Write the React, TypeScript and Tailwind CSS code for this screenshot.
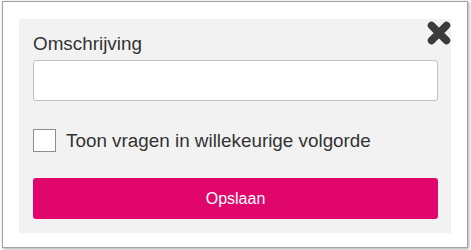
import React from 'react';

const CloseIcon = () => (
  <svg width="24" height="24" viewBox="0 0 24 24" aria-hidden="true">
    <path d="M4.5 4.5 L19.5 19.5 M19.5 4.5 L4.5 19.5" stroke="#3b3b3b" strokeWidth="7.5" strokeLinecap="round" fill="none" />
  </svg>
);

const App = () => {
  return (
    <div className="w-[471px] h-[250px] bg-white overflow-hidden" style={{ fontFamily: '"Liberation Sans", Arial, sans-serif' }}>
      <div className="ml-[2px] mt-[1px] w-[466px] h-[247px] border border-[#a3a3a3] bg-white shadow-[1px_1px_3px_rgba(0,0,0,0.35)] pt-[17px] pl-[16px]">
        <div className="relative w-[432px] h-[214px] bg-[#f2f2f2] pt-[14px] pl-[14px]">
          <button type="button" className="absolute left-[408px] top-[2px] w-[24px] h-[24px] flex items-center justify-center">
            <CloseIcon />
          </button>
          <label className="block text-[18.85px] leading-[22px] text-[#333333] mb-[5px]">Omschrijving</label>
          <input
            type="text"
            className="block w-[405px] h-[41px] bg-white border border-[#c2c2c2] rounded-[3px] px-2 outline-none"
          />
          <label className="flex items-center mt-[28px] h-[23px] gap-[10px]">
            <span className="w-[23px] h-[23px] bg-white border border-[#8f8f8f] shrink-0" />
            <span className="text-[18.85px] leading-[22px] text-[#333333]">Toon vragen in willekeurige volgorde</span>
          </label>
          <button
            type="button"
            className="mt-[26px] w-[405px] h-[41px] bg-[#e1066c] rounded-[3px] text-white text-[16px] flex items-center justify-center"
          >
            Opslaan
          </button>
        </div>
      </div>
    </div>
  );
};

export default App;
